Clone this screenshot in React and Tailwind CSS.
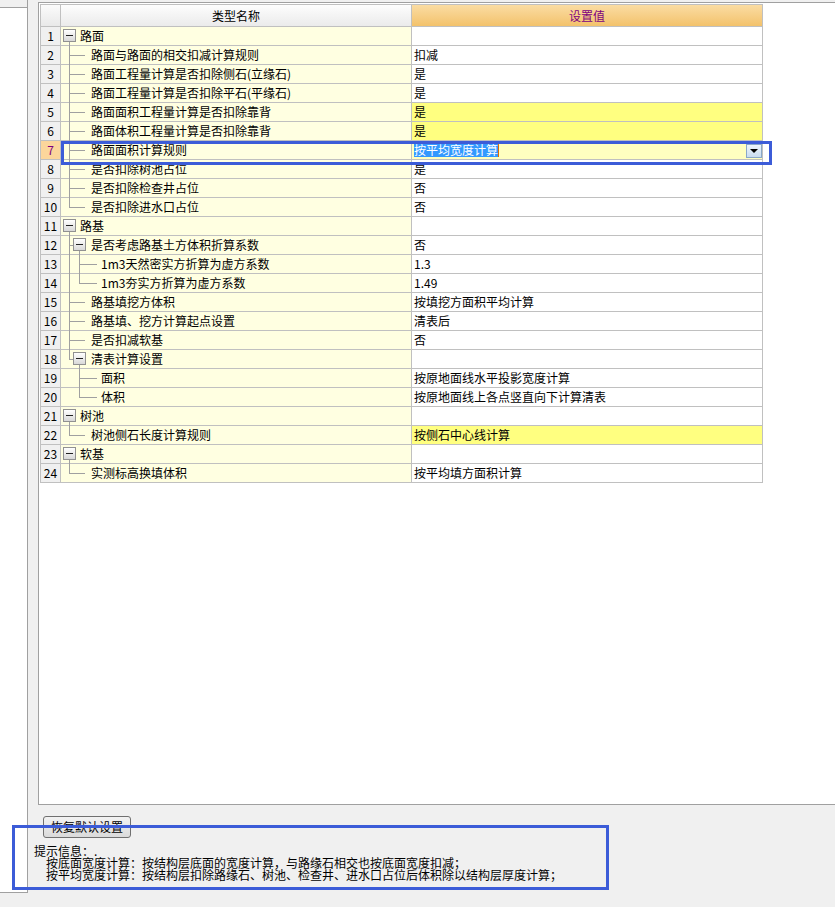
import React from "react";

const rows = [
  { n: 1, label: "路面", box: 1, v1: "bottom", x: 19 },
  { n: 2, label: "路面与路面的相交扣减计算规则", value: "扣减", v1: "full", h1: "long" },
  { n: 3, label: "路面工程量计算是否扣除侧石(立缘石)", value: "是", v1: "full", h1: "long" },
  { n: 4, label: "路面工程量计算是否扣除平石(平缘石)", value: "是", v1: "full", h1: "long" },
  { n: 5, label: "路面面积工程量计算是否扣除靠背", value: "是", v1: "full", h1: "long", hl: true },
  { n: 6, label: "路面体积工程量计算是否扣除靠背", value: "是", v1: "full", h1: "long", hl: true },
  { n: 7, label: "路面面积计算规则", value: "按平均宽度计算", v1: "full", h1: "long", active: true },
  { n: 8, label: "是否扣除树池占位", value: "是", v1: "full", h1: "long" },
  { n: 9, label: "是否扣除检查井占位", value: "否", v1: "full", h1: "long" },
  { n: 10, label: "是否扣除进水口占位", value: "否", v1: "top", h1: "long" },
  { n: 11, label: "路基", box: 1, v1: "bottom", x: 19 },
  { n: 12, label: "是否考虑路基土方体积折算系数", value: "否", v1: "full", h1: "short", box: 2, v2: "bottom" },
  { n: 13, label: "1m3天然密实方折算为虚方系数", value: "1.3", v1: "full", v2: "full", h2: true, x: 40 },
  { n: 14, label: "1m3夯实方折算为虚方系数", value: "1.49", v1: "full", v2: "top", h2: true, x: 40 },
  { n: 15, label: "路基填挖方体积", value: "按填挖方面积平均计算", v1: "full", h1: "long" },
  { n: 16, label: "路基填、挖方计算起点设置", value: "清表后", v1: "full", h1: "long" },
  { n: 17, label: "是否扣减软基", value: "否", v1: "full", h1: "long" },
  { n: 18, label: "清表计算设置", value: "", v1: "top", h1: "short", box: 2, v2: "bottom" },
  { n: 19, label: "面积", value: "按原地面线水平投影宽度计算", v2: "full", h2: true, x: 40 },
  { n: 20, label: "体积", value: "按原地面线上各点竖直向下计算清表", v2: "top", h2: true, x: 40 },
  { n: 21, label: "树池", box: 1, v1: "bottom", x: 19 },
  { n: 22, label: "树池侧石长度计算规则", value: "按侧石中心线计算", v1: "top", h1: "long", hl: true },
  { n: 23, label: "软基", box: 1, v1: "bottom", x: 19 },
  { n: 24, label: "实测标高换填体积", value: "按平均填方面积计算", v1: "top", h1: "long" },
];

const Toggle = ({ left }) => (
  <span
    className="absolute top-[2px] w-[13px] h-[13px] border border-[#919191] bg-gradient-to-b from-white to-[#d8d8d8] flex items-center justify-center"
    style={{ left }}
  >
    <span className="w-[7px] h-[1px] bg-[#222]" />
  </span>
);

const VLine = ({ left, mode }) => {
  if (mode === "full") return <span className="absolute top-0 bottom-[-1px] w-[1px] bg-[#a0a0a0]" style={{ left }} />;
  if (mode === "top") return <span className="absolute top-0 h-[9px] w-[1px] bg-[#a0a0a0]" style={{ left }} />;
  return <span className="absolute top-[15px] bottom-[-1px] w-[1px] bg-[#a0a0a0]" style={{ left }} />;
};

const NameCell = ({ r }) => (
  <div className="relative w-[351px] h-full border-r border-[#c0c0c0] bg-[#ffffe1]">
    {r.v1 && <VLine left={8} mode={r.v1} />}
    {r.h1 === "long" && <span className="absolute top-[9px] left-[8px] w-[16px] h-[1px] bg-[#a0a0a0]" />}
    {r.h1 === "short" && <span className="absolute top-[9px] left-[8px] w-[4px] h-[1px] bg-[#a0a0a0]" />}
    {r.v2 && <VLine left={18} mode={r.v2} />}
    {r.h2 && <span className="absolute top-[9px] left-[18px] w-[18px] h-[1px] bg-[#a0a0a0]" />}
    {r.box === 1 && <Toggle left={2} />}
    {r.box === 2 && <Toggle left={12} />}
    <span className="absolute top-0 h-full flex items-center whitespace-nowrap" style={{ left: r.x || 30 }}>
      {r.label}
    </span>
  </div>
);

const ValueCell = ({ r }) => {
  if (r.active) {
    return (
      <div className="relative w-[351px] h-full border-r border-[#c0c0c0] bg-[#ffffc0] flex items-center pl-[2px]">
        <span className="bg-[#3399ff] text-white leading-[14px]">{r.value}</span>
        <span className="w-[1px] h-[14px] bg-[#e06a00]" />
        <span className="absolute right-[0px] top-[3px] w-[16px] h-[14px] border border-[#8aa8c8] bg-gradient-to-b from-[#eef5fc] to-[#c9dcf0] flex items-center justify-center">
          <span className="w-0 h-0 border-l-[4px] border-r-[4px] border-t-[4px] border-l-transparent border-r-transparent border-t-black" />
        </span>
      </div>
    );
  }
  return (
    <div
      className={
        "w-[351px] h-full border-r border-[#c0c0c0] flex items-center pl-[2px] whitespace-nowrap " +
        (r.hl ? "bg-[#ffff80]" : "bg-white")
      }
    >
      {r.value}
    </div>
  );
};

export default function App() {
  return (
    <div className="relative w-[835px] h-[907px] overflow-hidden bg-[#f0f0f0] flex font-['Noto_Sans_CJK_SC',sans-serif] text-[12px] text-black">
      {/* left side panel */}
      <div className="w-[28px] shrink-0 flex flex-col">
        <div className="h-[893px] flex flex-col border-r border-b border-[#a0a0a0]">
          <div className="h-[8px] bg-[#f0f0f0] border-b border-[#a0a0a0]" />
          <div className="flex-1 bg-white" />
        </div>
        <div className="flex-1 bg-[#f0f0f0]" />
      </div>

      {/* main area */}
      <div className="flex-1 flex flex-col">
        <div className="h-[2px]" />
        <div className="ml-[10px] h-[803px] border-t border-l border-b border-[#a0a0a0] bg-white pl-[1px] pt-[1px]">
          <div className="inline-block border-l border-t border-[#c0c0c0]">
            {/* header */}
            <div className="flex h-[22px] border-b border-[#c0c0c0]">
              <div className="w-[20px] h-full border-r border-[#c0c0c0] bg-gradient-to-b from-[#fbfbfb] to-[#e9e9e9]" />
              <div className="w-[351px] h-full border-r border-[#c0c0c0] bg-gradient-to-b from-[#fdfdfd] to-[#ebebeb] flex items-center justify-center">
                类型名称
              </div>
              <div className="w-[351px] h-full border-r border-[#c0c0c0] bg-gradient-to-b from-[#fadca2] to-[#f3c26b] flex items-center justify-center text-[#800080]">
                设置值
              </div>
            </div>
            {rows.map((r) => (
              <div key={r.n} className="flex h-[19px] border-b border-[#c0c0c0]">
                <div
                  className={
                    "w-[20px] h-full border-r border-[#c0c0c0] flex items-center justify-center " +
                    (r.active ? "bg-[#fcd69b] text-[#800080]" : "bg-[#f0f0f0]")
                  }
                >
                  {r.n}
                </div>
                <NameCell r={r} />
                <ValueCell r={r} />
              </div>
            ))}
          </div>
        </div>

        <button className="mt-[11px] ml-[15px] w-[88px] h-[22px] border border-[#707070] rounded-[3px] bg-gradient-to-b from-[#f3f3f3] to-[#dadada] text-[12px] leading-[20px]">
          恢复默认设置
        </button>

        <div className="mt-[7px] ml-[6px] leading-[12px] whitespace-nowrap">
          <div>提示信息：.</div>
          <div className="pl-[12px]">按底面宽度计算：按结构层底面的宽度计算，与路缘石相交也按底面宽度扣减；</div>
          <div className="pl-[12px]">按平均宽度计算：按结构层扣除路缘石、树池、检查井、进水口占位后体积除以结构层厚度计算；</div>
        </div>
      </div>

      {/* annotation frames */}
      <div className="absolute left-[61px] top-[141px] w-[711px] h-[24px] border-[3px] border-[#3c5cd8]" />
      <div className="absolute left-[12px] top-[825px] w-[597px] h-[65px] border-[3px] border-[#3c5cd8]" />
    </div>
  );
}
